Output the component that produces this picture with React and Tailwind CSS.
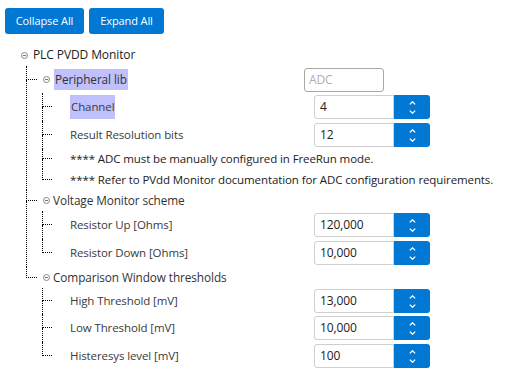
import React from 'react';

const font = { fontFamily: '"Open Sans", "Noto Sans", sans-serif', letterSpacing: '-0.1px' };

function Minus() {
    return (
        <svg width="7" height="7" viewBox="0 0 7 7" className="shrink-0">
            <circle cx="3.5" cy="3.5" r="3" fill="none" stroke="#7a7a7a" strokeWidth="0.9" />
            <line x1="1.8" y1="3.5" x2="5.2" y2="3.5" stroke="#6a6a6a" strokeWidth="0.9" />
        </svg>
    );
}

function Spinner({ value }) {
    return (
        <div className="flex h-[24px]">
            <div className="w-[80px] h-full border border-[#cfcfcf] rounded-l-[3px] flex items-center pl-[5px] text-[12px] text-[#222]">
                {value}
            </div>
            <div className="w-[36px] h-full bg-[#0078d4] rounded-r-[3px] flex flex-col items-center justify-center gap-[5px]">
                <svg width="7" height="4" viewBox="0 0 7 4">
                    <path d="M0.8 3.4 L3.5 0.8 L6.2 3.4" fill="none" stroke="#fff" strokeWidth="1.3" />
                </svg>
                <svg width="7" height="4" viewBox="0 0 7 4">
                    <path d="M0.8 0.6 L3.5 3.2 L6.2 0.6" fill="none" stroke="#fff" strokeWidth="1.3" />
                </svg>
            </div>
        </div>
    );
}

// one child in a dotted tree: connector cell + content
function Branch({ last, head, w, children }) {
    return (
        <div className="flex">
            <div className="flex flex-col shrink-0" style={{ width: w }}>
                <div className="border-l border-b border-dotted border-black" style={{ height: head / 2 }} />
                <div className={'flex-1 ' + (last ? '' : 'border-l border-dotted border-black')} />
            </div>
            <div className="flex-1">{children}</div>
        </div>
    );
}

function Leaf({ label, value, h = 28, last, hl }) {
    return (
        <Branch last={last} head={h} w={10}>
            <div className="flex items-center" style={{ height: h }}>
                <div className="w-[262px] pl-[18px] text-[11.5px] text-[#3a3a3a]">
                    <span className={hl ? 'inline-block bg-[#c0c0fd] px-[1px] py-[3px]' : ''}>{label}</span>
                </div>
                {value !== undefined && <Spinner value={value} />}
            </div>
        </Branch>
    );
}

function Note({ text, h, last }) {
    return (
        <Branch last={last} head={h} w={10}>
            <div className="flex items-center pl-[18px] text-[11.5px] text-[#222] whitespace-nowrap" style={{ height: h }}>
                {text}
            </div>
        </Branch>
    );
}

function Group({ title, h, last, right, children }) {
    return (
        <Branch last={last} head={h} w={11}>
            <div className="flex items-center" style={{ height: h }}>
                <div className="w-[267px] flex items-center pl-[6px] gap-[3px] text-[11.8px] text-[#333]">
                    <Minus />
                    {right ? (
                        <span className="inline-block ml-[1px] bg-[#c0c0fd] px-[1px] py-[2px]">{title}</span>
                    ) : (
                        <span>{title}</span>
                    )}
                </div>
                {right}
            </div>
            <div className="ml-[5px]">{children}</div>
        </Branch>
    );
}

export default function App() {
    return (
        <div className="w-[505px] h-[382px] bg-white overflow-hidden" style={font}>
            <div className="flex gap-[5px] pt-[8px] pl-[5px]">
                <button className="w-[79px] h-[26px] bg-[#0078d4] text-white text-[11px] rounded-[3px]">
                    Collapse All
                </button>
                <button className="w-[75px] h-[26px] bg-[#0078d4] text-white text-[11px] rounded-[3px]">
                    Expand All
                </button>
            </div>

            <div className="mt-[10px] pl-[21px]">
                <div className="flex items-center gap-[5px] h-[22px] text-[12px] text-[#222]">
                    <Minus />
                    <span>PLC PVDD Monitor</span>
                </div>
                <div className="ml-[5px]">
                    <Group
                        title="Peripheral lib"
                        h={27}
                        right={
                            <div className="w-[80px] h-[24px] border border-[#a8a8a8] rounded-[3px] flex items-center pl-[4px] text-[12px] text-[#b0b0b0]">
                                ADC
                            </div>
                        }
                    >
                        <Leaf label="Channel" value="4" hl />
                        <Leaf label="Result Resolution bits" value="12" />
                        <Note h={20} text="**** ADC must be manually configured in FreeRun mode." />
                        <Note h={21} last text="**** Refer to PVdd Monitor documentation for ADC configuration requirements." />
                    </Group>
                    <Group title="Voltage Monitor scheme" h={21}>
                        <Leaf label="Resistor Up [Ohms]" value="120,000" />
                        <Leaf label="Resistor Down [Ohms]" value="10,000" last />
                    </Group>
                    <Group title="Comparison Window thresholds" h={21} last>
                        <Leaf label="High Threshold [mV]" value="13,000" h={26} />
                        <Leaf label="Low Threshold [mV]" value="10,000" />
                        <Leaf label="Histeresys level [mV]" value="100" last />
                    </Group>
                </div>
            </div>
        </div>
    );
}
